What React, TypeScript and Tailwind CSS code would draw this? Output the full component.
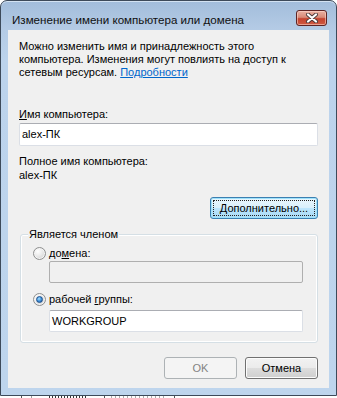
import React from "react";

function Radio({ checked }: { checked?: boolean }) {
  return (
    <span className="flex h-[13px] w-[13px] shrink-0 items-center justify-center rounded-full border border-[#8e8f8f] bg-[radial-gradient(circle_at_35%_30%,#ffffff_0%,#ececec_40%,#c8c8c8_100%)] shadow-[inset_0_0_0_1px_#f4f4f4]">
      {checked && (
        <span className="h-[7px] w-[7px] rounded-full border border-[#1c4f8c] bg-[radial-gradient(circle_at_40%_35%,#a8e0ff_0%,#4a9be0_45%,#164f97_100%)]" />
      )}
    </span>
  );
}

function CloseX() {
  return (
    <svg width="14" height="10" viewBox="0 0 14 10">
      <path d="M3 1.5 L11 8.5 M11 1.5 L3 8.5" stroke="#4a3a3a" strokeWidth="4" strokeLinecap="round" />
      <path d="M3 1.5 L11 8.5 M11 1.5 L3 8.5" stroke="#ffffff" strokeWidth="2.2" strokeLinecap="round" />
    </svg>
  );
}

export default function App() {
  return (
    <div className="relative h-[398px] w-[337px] overflow-hidden bg-white text-[11px] leading-[13px] text-black [font-family:'Liberation_Sans',Arial,sans-serif]">
      <div className="flex h-[396px] w-[337px] flex-col rounded-t-[7px] border border-[#3d4a5a] bg-[linear-gradient(to_bottom,#a2bddb_0px,#b4cbe5_28px,#bcd3ec_60px,#bed5ed_100%)] shadow-[inset_0_1px_0_0_#d3e2f2]">
        {/* Title bar */}
        <div className="flex h-[29px] shrink-0 items-start justify-between pl-[11px] pr-[9px] pt-[9px]">
          <div className="mt-[2px] text-[11.6px] leading-[15px] text-[#101010]">
            Изменение имени компьютера или домена
          </div>
          <div className="flex h-[16px] w-[31px] items-center justify-center rounded-[3px] border border-[#5e2424] bg-[linear-gradient(to_bottom,#e9b1a3_0%,#d98a78_45%,#c4432f_55%,#cf5a43_100%)] shadow-[inset_0_0_0_1px_rgba(255,220,210,0.55)]">
            <CloseX />
          </div>
        </div>

        {/* Client area */}
        <div className="mx-[7px] mb-[7px] flex flex-1 flex-col bg-[#f0f0f0] px-[11px] pt-[10px]">
          <p>
            Можно изменить имя и принадлежность этого
            <br />
            компьютера. Изменения могут повлиять на доступ к
            <br />
            сетевым ресурсам. <span className="text-[#0066cc] underline">Подробности</span>
          </p>

          <div className="mt-[29px]">
            <span className="underline">И</span>мя компьютера:
          </div>
          <div className="mt-[2px] flex h-[23px] items-center rounded-[2px] border border-[#dbdfe6] border-t-[#abadb3] bg-white pl-[2px]">
            alex-ПК
          </div>

          <div className="mt-[9px]">Полное имя компьютера:</div>
          <div className="mt-[1px]">alex-ПК</div>

          <div className="mt-[15px] flex justify-end">
            <div className="relative flex h-[22px] w-[108px] items-center justify-center rounded-[3px] border border-[#3c7fb1] bg-[linear-gradient(to_bottom,#eaf6fd_0%,#d9f0fc_50%,#bee6fd_50%,#a7d9f5_100%)] shadow-[inset_0_0_0_1px_#9fe2fb]">
              <span className="absolute inset-[2px] border border-dotted border-[#222]" />
              <span>
                <span className="underline">Д</span>ополнительно...
              </span>
            </div>
          </div>

          {/* Group box */}
          <div className="relative ml-[1px] mt-[15px] rounded-[3px] border border-[#d5dfe5] pb-[10px] pl-[12px] pr-[14px] pt-[12px] shadow-[inset_0_0_0_1px_#ffffff]">
            <span className="absolute left-[7px] top-[-7px] bg-[#f0f0f0] px-[1px]">Является членом</span>
            <div className="flex h-[13px] items-center gap-[3px]">
              <Radio />
              <span>
                до<span className="underline">м</span>ена:
              </span>
            </div>
            <div className="ml-[16px] mt-[1px] h-[22px] rounded-[2px] border border-[#afafaf] bg-[#f0f0f0]" />
            <div className="mt-[10px] flex h-[13px] items-center gap-[3px]">
              <Radio checked />
              <span>
                рабочей <span className="underline">г</span>руппы:
              </span>
            </div>
            <div className="ml-[16px] mt-[4px] flex h-[22px] items-center rounded-[2px] border border-[#dbdfe6] border-t-[#abadb3] bg-white pl-[2px]">
              WORKGROUP
            </div>
          </div>

          <div className="mt-[14px] flex justify-end gap-[8px]">
            <div className="flex h-[22px] w-[73px] items-center justify-center rounded-[3px] border border-[#adb2b5] bg-[#f4f4f4] text-[#838383]">
              OK
            </div>
            <div className="flex h-[22px] w-[73px] items-center justify-center rounded-[3px] border border-[#707070] bg-[linear-gradient(to_bottom,#f2f2f2_0%,#ebebeb_50%,#dddddd_50%,#cfcfcf_100%)] shadow-[inset_0_0_0_1px_#fcfcfc]">
              Отмена
            </div>
          </div>
        </div>
      </div>
      {/* remnants below window */}
      <div className="flex h-[2px] items-start bg-white">
        <div className="ml-[21px] h-[2px] w-[1px] bg-[#555]" />
        <div className="ml-[9px] h-[2px] w-[1px] bg-[#999]" />
        <div className="ml-[17px] h-[2px] w-[38px] bg-[repeating-linear-gradient(to_right,#333_0px,#333_1px,transparent_1px,transparent_3px)]" />
        <div className="ml-[17px] h-[2px] w-[1px] bg-[#555]" />
        <div className="ml-[6px] h-[2px] w-[55px] bg-[repeating-linear-gradient(to_right,#aaa_0px,#aaa_1px,transparent_1px,transparent_4px)]" />
        <div className="ml-[8px] h-[2px] w-[1px] bg-[#555]" />
      </div>
    </div>
  );
}
